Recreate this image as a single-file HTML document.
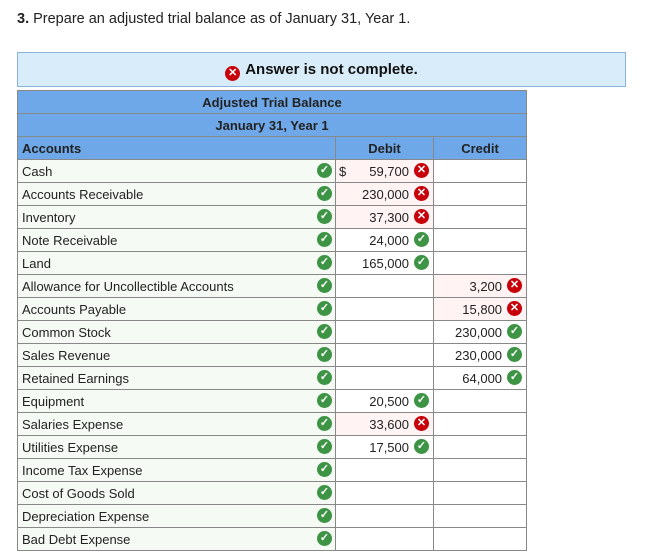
<html><head><style>
body{margin:0;width:645px;height:552px;overflow:hidden;background:#fff;font-family:"Liberation Sans",sans-serif;color:#222}
.q{position:absolute;left:17px;top:11px;font-size:14.5px}
.alert{position:absolute;left:17px;top:52px;width:607px;height:33px;background:#d9ecfa;border:1px solid #8ab4e0;text-align:center;font-weight:bold;font-size:15px;line-height:33px;color:#111}
table{position:absolute;left:17px;top:90px;border-collapse:collapse;table-layout:fixed;width:509px;font-size:13px}
td{border:1px solid #888;height:23px;padding:0 4px;box-sizing:border-box;white-space:nowrap;position:relative}
.h td{background:#6fa8e8;font-weight:bold;color:#222}
.a{background:#f5faf4}
.p{background:#fff3f3}
.n{text-align:right;padding-right:24px}
.i{position:absolute;top:3px;width:15px;height:15px;border-radius:50%;color:#fff;font-size:11px;line-height:15px;text-align:center;font-weight:bold}
.g{background:#3e9445}.r{background:#c8000a}
.a .i{right:3px}.n .i{right:4px}
.d{position:absolute;left:3px}
</style></head><body>
<div class="q"><b>3.</b> Prepare an adjusted trial balance as of January 31, Year 1.</div>
<div class="alert"><span class="i r" style="position:relative;display:inline-block;top:2px;margin-right:5px;line-height:15px">✕</span>Answer is not complete.</div>
<table>
<col style="width:318px"><col style="width:98px"><col style="width:93px">
<tr class="h"><td colspan="3" style="text-align:center">Adjusted Trial Balance</td></tr>
<tr class="h"><td colspan="3" style="text-align:center">January 31, Year 1</td></tr>
<tr class="h"><td>Accounts</td><td style="text-align:center">Debit</td><td style="text-align:center">Credit</td></tr>
<tr><td class="a">Cash<span class="i g">✓</span></td><td class="n p"><span class="d">$</span>59,700<span class="i r">✕</span></td><td></td></tr>
<tr><td class="a">Accounts Receivable<span class="i g">✓</span></td><td class="n p">230,000<span class="i r">✕</span></td><td></td></tr>
<tr><td class="a">Inventory<span class="i g">✓</span></td><td class="n p">37,300<span class="i r">✕</span></td><td></td></tr>
<tr><td class="a">Note Receivable<span class="i g">✓</span></td><td class="n">24,000<span class="i g">✓</span></td><td></td></tr>
<tr><td class="a">Land<span class="i g">✓</span></td><td class="n">165,000<span class="i g">✓</span></td><td></td></tr>
<tr><td class="a">Allowance for Uncollectible Accounts<span class="i g">✓</span></td><td></td><td class="n p">3,200<span class="i r">✕</span></td></tr>
<tr><td class="a">Accounts Payable<span class="i g">✓</span></td><td></td><td class="n p">15,800<span class="i r">✕</span></td></tr>
<tr><td class="a">Common Stock<span class="i g">✓</span></td><td></td><td class="n">230,000<span class="i g">✓</span></td></tr>
<tr><td class="a">Sales Revenue<span class="i g">✓</span></td><td></td><td class="n">230,000<span class="i g">✓</span></td></tr>
<tr><td class="a">Retained Earnings<span class="i g">✓</span></td><td></td><td class="n">64,000<span class="i g">✓</span></td></tr>
<tr><td class="a">Equipment<span class="i g">✓</span></td><td class="n">20,500<span class="i g">✓</span></td><td></td></tr>
<tr><td class="a">Salaries Expense<span class="i g">✓</span></td><td class="n p">33,600<span class="i r">✕</span></td><td></td></tr>
<tr><td class="a">Utilities Expense<span class="i g">✓</span></td><td class="n">17,500<span class="i g">✓</span></td><td></td></tr>
<tr><td class="a">Income Tax Expense<span class="i g">✓</span></td><td></td><td></td></tr>
<tr><td class="a">Cost of Goods Sold<span class="i g">✓</span></td><td></td><td></td></tr>
<tr><td class="a">Depreciation Expense<span class="i g">✓</span></td><td></td><td></td></tr>
<tr><td class="a">Bad Debt Expense<span class="i g">✓</span></td><td></td><td></td></tr>
</table>
</body></html>
